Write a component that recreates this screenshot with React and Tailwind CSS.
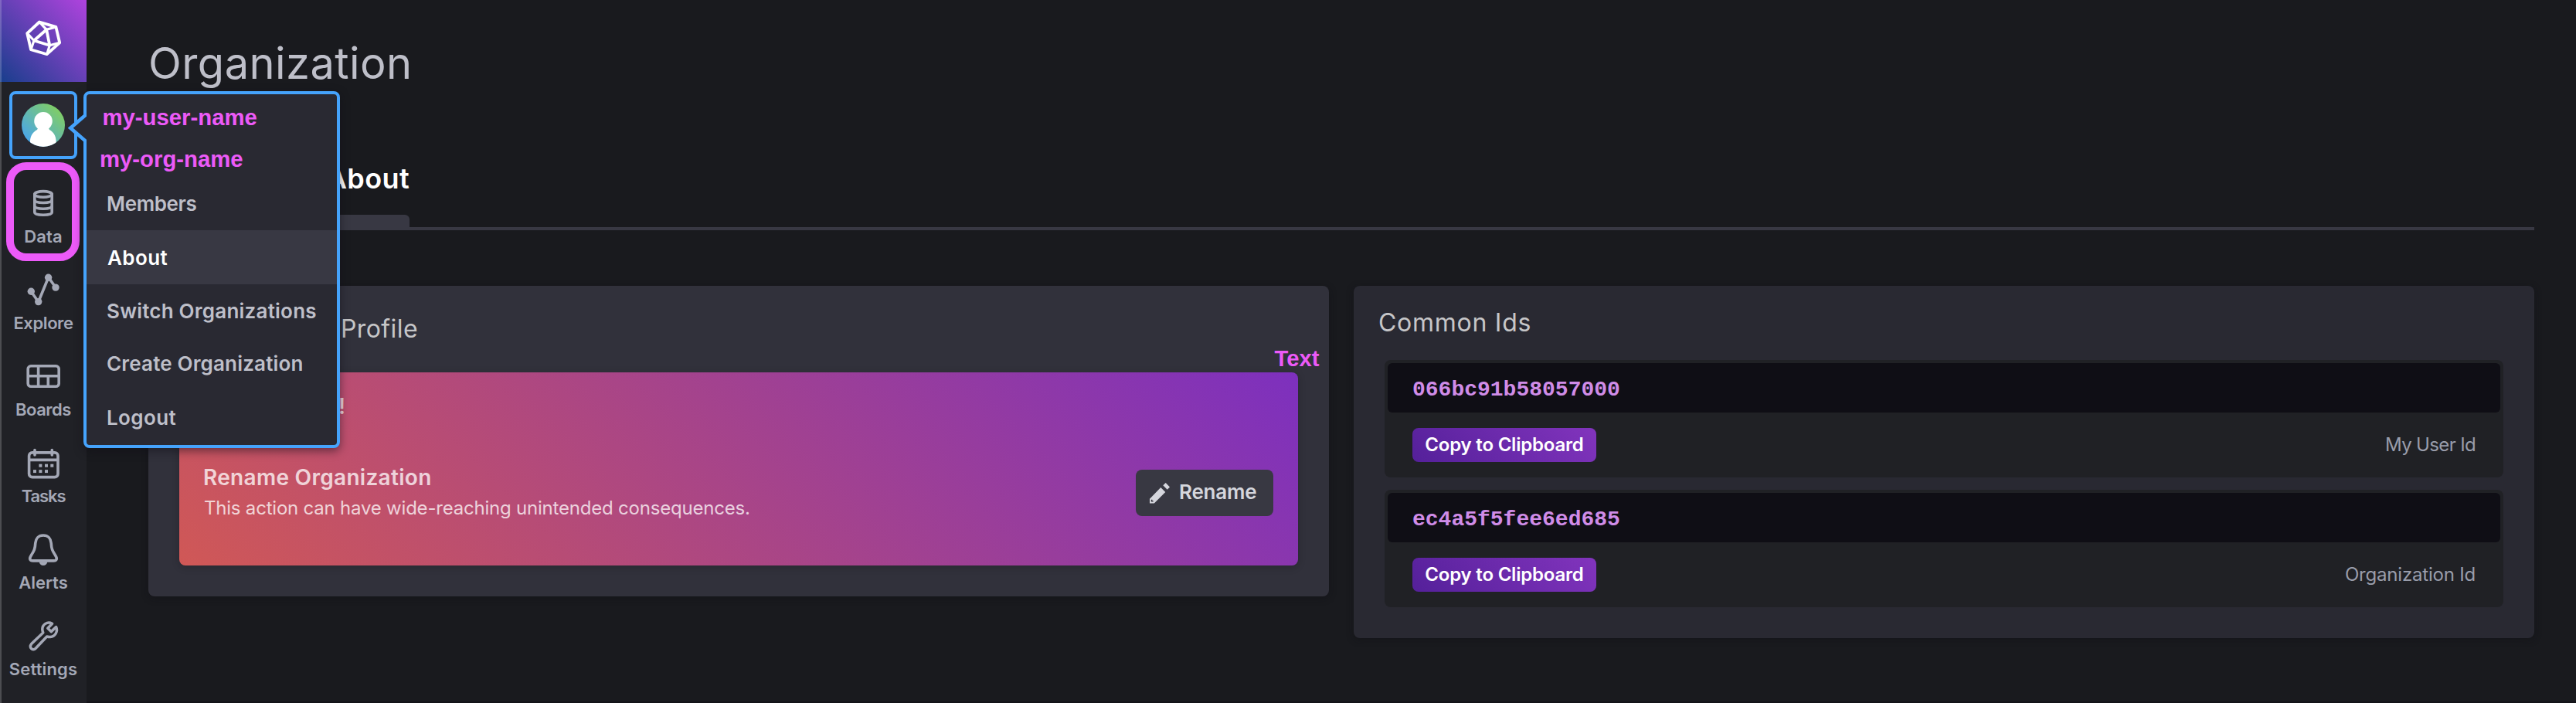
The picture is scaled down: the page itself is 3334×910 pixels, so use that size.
import clsx from "clsx";

const stroke = {
  fill: "none",
  stroke: "currentColor",
  strokeWidth: 3.6,
  strokeLinecap: "round",
  strokeLinejoin: "round",
};

const DataIcon = () => (
  <g {...stroke}>
    <ellipse cx="24" cy="12.4" rx="11.2" ry="3.8" />
    <path d="M12.8 12.4V36C12.8 40.3 35.2 40.3 35.2 36V12.4" />
    <path d="M12.8 20.2C13.6 24.6 34.4 24.6 35.2 20.2M12.8 28C13.6 32.4 34.4 32.4 35.2 28" />
  </g>
);

const ExploreIcon = () => (
  <g {...stroke}>
    <path d="M8.2 26.3L17.7 39.7L30.7 8L40 21" />
    <g fill="currentColor" stroke="none">
      <circle cx="8.3" cy="26.3" r="4.7" />
      <circle cx="17.7" cy="39.6" r="4.7" />
      <circle cx="30.6" cy="8.2" r="4.7" />
      <circle cx="40" cy="21.1" r="4.7" />
    </g>
  </g>
);

const BoardsIcon = () => (
  <g {...stroke} strokeLinecap="butt">
    <rect x="4.2" y="10.8" width="40" height="26.5" rx="3.8" />
    <path d="M4.2 23.7H44.2M17.6 10.8V37.3M30.3 23.7V37.3" />
  </g>
);

const TasksIcon = () => (
  <g {...stroke}>
    <rect x="5.6" y="10.9" width="37.4" height="31.7" rx="4.2" />
    <path d="M5.6 20.4H43" strokeLinecap="butt" />
    <path d="M13 7.5V14M35.3 7.5V14" />
    <g fill="currentColor" stroke="none">
      <rect x="18.4" y="25.7" width="4" height="4" />
      <rect x="26" y="25.7" width="4" height="4" />
      <rect x="33.3" y="25.7" width="4" height="4" />
      <rect x="11" y="33.1" width="4" height="4" />
      <rect x="18.4" y="33.1" width="4" height="4" />
      <rect x="26" y="33.1" width="4" height="4" />
    </g>
  </g>
);

const AlertsIcon = () => (
  <g {...stroke}>
    <path d="M24 6C17.6 6 14.2 10.4 13.8 16C13.4 23.4 12.4 25.6 8.3 32C5.3 36.6 6.8 38.9 10.6 38.9H37.4C41.2 38.9 42.7 36.6 39.7 32C35.6 25.6 34.6 23.4 34.2 16C33.8 10.4 30.4 6 24 6Z" />
    <path d="M18.6 40.2H29.4C28.8 43.4 26.8 45 24 45C21.2 45 19.2 43.4 18.6 40.2Z" fill="currentColor" stroke="none" />
  </g>
);

const SettingsIcon = () => (
  <g {...stroke} strokeWidth="3.5">
    <path d="M35.6 8.2C29 5 22.8 9.4 22.8 15.6C22.8 17.4 23.2 18.6 23.8 20L8.6 34.6C4.8 39 10.2 44.2 14.2 40.2L28.6 25C30.2 25.4 31.6 25.6 33 25.4C39.2 24.9 43.4 18.6 40.6 12.6L34.2 18.6L29.8 14.2Z" />
  </g>
);

const navItems = [
  { label: "Data", Icon: DataIcon, track: "tracking-[0.1px]" },
  { label: "Explore", Icon: ExploreIcon, track: "tracking-[-0.4px]" },
  { label: "Boards", Icon: BoardsIcon, track: "tracking-[-0.5px]" },
  { label: "Tasks", Icon: TasksIcon, track: "tracking-[-1.1px]" },
  { label: "Alerts", Icon: AlertsIcon, track: "tracking-normal" },
  { label: "Settings", Icon: SettingsIcon, track: "tracking-[0.15px]" },
];

const menuItems = [
  { label: "Members", cls: "h-[70px] pl-[26px] tracking-[-0.35px]" },
  { label: "About", cls: "h-[70px] pl-[27px] tracking-[0.4px]", active: true },
  { label: "Switch Organizations", cls: "h-[69px] pl-[26px] tracking-[0.22px]" },
  { label: "Create Organization", cls: "h-[67px] pl-[26px] tracking-[0.17px]" },
  { label: "Logout", cls: "h-[72px] pl-[26px] tracking-[0.4px]" },
];

const ids = [
  { value: "066bc91b58057000", label: "My User Id", track: "tracking-[-0.65px]" },
  { value: "ec4a5f5fee6ed685", label: "Organization Id", track: "tracking-[-0.2px]" },
];

function Logo() {
  return (
    <div className="flex h-[106px] w-28 items-center justify-center bg-linear-[45deg,#183e8c,#b043de]">
      <svg className="h-[106px] w-28" viewBox="0 0 112 106" fill="none" stroke="#fff" strokeWidth="3.8" strokeLinejoin="round">
        <path d="M51 28.5L72.4 34.9L77.2 55.3L60.7 70.2L40 64.2L35.2 43.2Z" />
        <path d="M60.2 38.3L44 52.5L64.3 58.8Z" />
        <path d="M51 28.5L60.2 38.3L72.4 34.9M35.2 43.2L44 52.5L40 64.2M77.2 55.3L64.3 58.8L60.7 70.2" strokeWidth="3.2" />
      </svg>
    </div>
  );
}

function Avatar() {
  return (
    <svg className="size-14" viewBox="0 0 56 56">
      <defs>
        <linearGradient id="avatar-bg" x1="0" y1="1" x2="1" y2="0">
          <stop offset="0.1" stopColor="#48a4ef" />
          <stop offset="0.85" stopColor="#7fcd68" />
        </linearGradient>
        <clipPath id="avatar-clip">
          <circle cx="28" cy="28" r="28" />
        </clipPath>
      </defs>
      <circle cx="28" cy="28" r="28" fill="url(#avatar-bg)" />
      <g clipPath="url(#avatar-clip)" fill="#fff">
        <circle cx="28" cy="22.8" r="11.8" />
        <path d="M22 30H34L36 34C41 36.5 44.6 42 44.6 49V56H11V49C11 42 15 36.5 20 34Z" />
      </g>
    </svg>
  );
}

function UserMenu() {
  return (
    <div className="absolute top-[118px] left-[108px] z-20 h-[462px] w-[332px] rounded-lg border-4 border-[#45a3fc] bg-[#292932] shadow-[0_4px_12px_rgba(15,14,21,0.5)]">
      <svg className="absolute top-[22px] left-[-24px] h-[44px] w-6" viewBox="0 0 24 44">
        <path d="M24 2.5L3.5 21.7L24 41Z" fill="#292932" />
        <path d="M26 2L3.2 21.7L26 41.5" fill="none" stroke="#45a3fc" strokeWidth="4.6" />
      </svg>
      <div className="h-[106px] pt-[3px] font-['Liberation_Sans',sans-serif] text-[29.3px] font-bold text-[#ec5af8]">
        <div className="pl-[20.5px] leading-[54px]">my-user-name</div>
        <div className="pl-[17px] leading-[54px]">my-org-name</div>
      </div>
      {menuItems.map((m) => (
        <div
          key={m.label}
          className={clsx(
            "flex items-center text-[26px] font-semibold whitespace-nowrap",
            m.cls,
            m.active ? "bg-[#383843] text-white" : "text-[#bebfc9]"
          )}
        >
          {m.label}
        </div>
      ))}
    </div>
  );
}

function Sidebar() {
  return (
    <aside className="relative flex w-28 shrink-0 flex-col bg-[#202126] text-[#a4a8b6]">
      <Logo />
      <div className="flex h-28 items-center justify-center">
        <div className="flex size-[88px] items-center justify-center rounded-lg border-4 border-[#45a3fc] bg-[#292932]">
          <Avatar />
        </div>
      </div>
      {navItems.map(({ label, Icon, track }) => (
        <div key={label} className="flex h-28 flex-col items-center pt-[21px]">
          <svg className="size-12 shrink-0" viewBox="0 0 48 48">
            <Icon />
          </svg>
          <span className={clsx("mt-[7px] text-[22px] leading-6 font-semibold", track)}>{label}</span>
        </div>
      ))}
      <div className="absolute inset-y-0 left-0 w-0.5 bg-white/20" />
      <div className="absolute top-[210px] left-2 h-[128px] w-[95px] rounded-[26px] border-10 border-[#ec5af8]" />
    </aside>
  );
}

function ProfilePanel() {
  return (
    <section className="relative h-[402px] w-[1528px] rounded-lg bg-[#31313b] px-10 shadow-[0_2px_10px_rgba(15,14,21,0.4)]">
      <h2 className="flex h-28 items-center pl-[209px] text-[32px] font-normal tracking-[0.4px] text-[#c6c6c8]">
        Profile
      </h2>
      <span className="absolute top-[77px] left-[1457.5px] font-['Liberation_Sans',sans-serif] text-[29.2px] leading-[34px] font-bold text-[#ec5af8]">
        Text
      </span>
      <div className="h-[250px] rounded-lg bg-linear-[45deg,#d05856,#7d30be] px-8 pt-[26px] text-white/75 shadow-[0_2px_10px_rgba(15,14,21,0.25)]">
        <p className="w-[183px] text-right text-[28px] leading-9 font-semibold">!</p>
        <div className="mt-[54px] flex items-center justify-between">
          <div>
            <h3 className="-ml-px text-[28px] leading-10 font-semibold tracking-[0.3px]">Rename Organization</h3>
            <p className="text-2xl leading-10 tracking-[-0.21px]">
              This action can have wide-reaching unintended consequences.
            </p>
          </div>
          <button className="flex h-[60px] w-[178px] items-center gap-3 rounded-lg bg-[#383842] pl-[18px] text-[26px] font-semibold tracking-[-0.2px] text-[#d5d6dd]">
            <svg className="h-[27px] w-[26px] shrink-0" viewBox="0 0 26 27" fill="currentColor">
              <path d="M20.7 0L26 5.5L22.7 8.7L17.3 3.3Z" />
              <path fillRule="evenodd" d="M14.3 6L20.3 12L5.8 26.4H0V20.7ZM1.8 21.8V24.6H4.6V23H3.4V21.8Z" />
            </svg>
            <span className="pb-[3px]">Rename</span>
          </button>
        </div>
      </div>
    </section>
  );
}

function CommonIds() {
  return (
    <section className="flex h-[456px] w-[1528px] flex-col rounded-lg bg-[#292932] px-10 shadow-[0_2px_10px_rgba(15,14,21,0.4)]">
      <h2 className="-ml-2 flex h-24 shrink-0 items-center text-[32px] font-normal tracking-[0.73px] text-[#c6c6c8]">
        Common Ids
      </h2>
      <div className="flex flex-col gap-4">
        {ids.map((id) => (
          <div key={id.value} className="h-[152px] rounded-lg bg-[#202125] p-1">
            <div className="flex h-16 items-center rounded-md bg-[#0f0e15] pt-[5px] pl-8 font-['Liberation_Mono',monospace] text-[28px] leading-8 font-bold text-[#d08ce8]">
              {id.value}
            </div>
            <div className="flex h-[84px] items-center justify-between px-8">
              <button className="h-11 w-[238px] rounded-lg bg-linear-[45deg,#54209a,#8234bd] pb-px text-2xl font-semibold tracking-[-0.2px] text-white">
                Copy to Clipboard
              </button>
              <span className={clsx("text-2xl text-[#999dab]", id.track)}>{id.label}</span>
            </div>
          </div>
        ))}
      </div>
    </section>
  );
}

export default function App() {
  return (
    <div className="relative flex h-[910px] w-[3334px] overflow-hidden bg-[#191a1e] font-['Inter','Roboto',sans-serif]">
      <Sidebar />
      <UserMenu />
      <main className="flex-1 border-b-2 border-[#131318] pt-12 pr-[54px] pl-20">
        <h1 className="text-[56px] leading-[68px] font-normal tracking-[0.44px] text-[#bebfc9]">Organization</h1>
        <nav className="mt-[92px] flex h-[90px] items-end border-b-4 border-[#383843] text-4xl text-white">
          <div className="flex w-[338px] flex-col items-end">
            <span className="leading-[46px] font-semibold tracking-[0.4px]">About</span>
            <div className="mt-6 h-4 w-[122px] rounded-t-md bg-[#383843]" />
          </div>
        </nav>
        <div className="mt-[72px] flex items-start gap-8">
          <ProfilePanel />
          <CommonIds />
        </div>
      </main>
    </div>
  );
}
